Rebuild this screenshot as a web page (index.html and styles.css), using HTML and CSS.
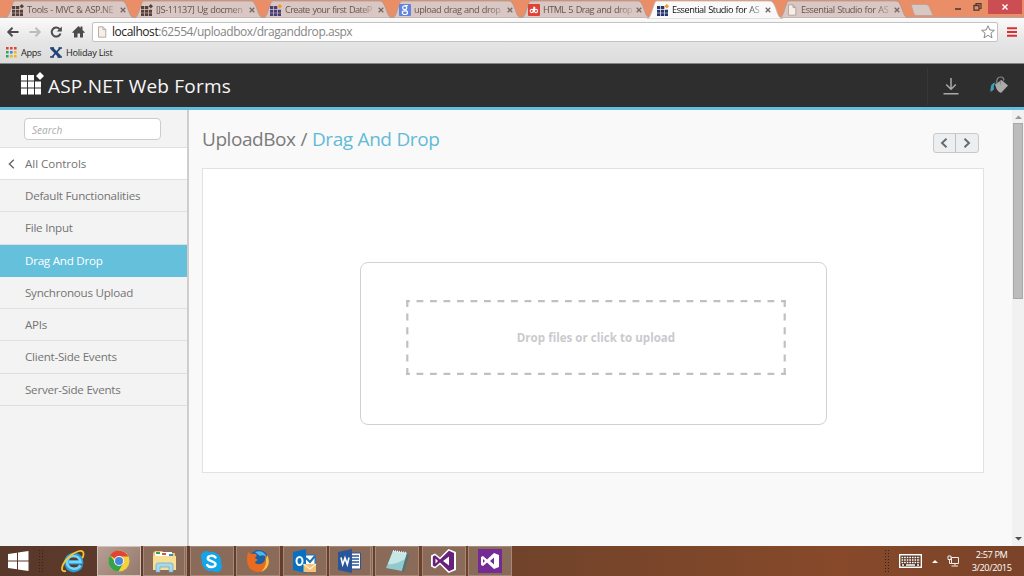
FILE: index.html
```html
<!DOCTYPE html>
<html lang="en">
<head>
<meta charset="utf-8">
<title>Essential Studio for ASP.NET Web Forms</title>
<link rel="stylesheet" href="styles.css">
</head>
<body>
<svg class="defs" width="0" height="0">
  <defs>
    <symbol id="tabshape" viewBox="0 0 136 19"><path d="M0 19C3 18 4 14 6 8C8 2 8 1 11 1H122C126 1 127 4 129 9C131 15 132 18 136 19Z"/></symbol>
    <symbol id="grid" viewBox="0 0 12 12"><path d="M0 2h3.300v3H0zM4 2h3.300v3H4zM0 5.700h3.300v3H0zM4 5.700h3.300v3H4zM8 5.700h3v3H8zM0 9.300h3.300v2.700H0zM4 9.300h3.300v2.700H4zM8 9.300h3v2.700H8z"/><path class="spark" d="M9.800 0L12 2.200L9.800 4.400L7.600 2.200Z"/></symbol>
    <symbol id="page" viewBox="0 0 10 12"><path d="M1.500 .8H6L8.800 3.600V11.200H1.500Z M6 .8V3.600H8.800"/></symbol>
  </defs>
</svg>
<div class="screen">
  <div class="tabs">
    <div class="tab"><svg class="shape"><use href="#tabshape"/></svg><svg class="fav brown"><use href="#grid"/></svg><span class="label">Tools - MVC &amp; ASP.NE</span><svg class="close" viewBox="0 0 6 6"><path d="M.7 .7L5.3 5.3M5.3 .7L.7 5.3"/></svg></div>
    <div class="tab"><svg class="shape"><use href="#tabshape"/></svg><svg class="fav brown"><use href="#grid"/></svg><span class="label">[JS-11137] Ug docmen</span><svg class="close" viewBox="0 0 6 6"><path d="M.7 .7L5.3 5.3M5.3 .7L.7 5.3"/></svg></div>
    <div class="tab"><svg class="shape"><use href="#tabshape"/></svg><svg class="fav purple"><use href="#grid"/></svg><span class="label tight">Create your first DateP</span><svg class="close" viewBox="0 0 6 6"><path d="M.7 .7L5.3 5.3M5.3 .7L.7 5.3"/></svg></div>
    <div class="tab"><svg class="shape"><use href="#tabshape"/></svg><svg class="fav" viewBox="0 0 12 12"><rect width="12" height="12" rx="1" fill="#6284df"/><ellipse cx="5.7" cy="3.7" rx="2" ry="1.9" fill="none" stroke="#fff" stroke-width="1.2"/><ellipse cx="5.9" cy="8.7" rx="2.6" ry="1.8" fill="none" stroke="#fff" stroke-width="1.2"/><path d="M6 1.6H9M6.5 5.5L7.5 7" stroke="#fff"/></svg><span class="label">upload drag and drop</span><svg class="close" viewBox="0 0 6 6"><path d="M.7 .7L5.3 5.3M5.3 .7L.7 5.3"/></svg></div>
    <div class="tab"><svg class="shape"><use href="#tabshape"/></svg><svg class="fav" viewBox="0 0 12 12"><rect width="12" height="12" rx="1" fill="#df4238"/><circle cx="3.8" cy="7" r="1.6" fill="none" stroke="#fff" stroke-width="1.1"/><circle cx="8" cy="7" r="1.6" fill="none" stroke="#fff" stroke-width="1.1"/><path d="M6 2.5L5.2 8.5M6.8 3L6.3 7" stroke="#fff" stroke-width="1.1"/></svg><span class="label tight">HTML 5 Drag and drop</span><svg class="close" viewBox="0 0 6 6"><path d="M.7 .7L5.3 5.3M5.3 .7L.7 5.3"/></svg></div>
    <div class="tab active"><svg class="shape"><use href="#tabshape"/></svg><svg class="fav navy"><use href="#grid"/></svg><span class="label">Essential Studio for AS</span><svg class="close" viewBox="0 0 6 6"><path d="M.7 .7L5.3 5.3M5.3 .7L.7 5.3"/></svg></div>
    <div class="tab"><svg class="shape"><use href="#tabshape"/></svg><svg class="fav paper"><use href="#page"/></svg><span class="label">Essential Studio for AS</span><svg class="close" viewBox="0 0 6 6"><path d="M.7 .7L5.3 5.3M5.3 .7L.7 5.3"/></svg></div>
    <svg class="newtab" viewBox="0 0 24 12"><path d="M1 .5H16Q18 .5 19 2.500L23 11.500H6Q4.500 11.500 3.700 9Z"/></svg>
    <div class="winbtns">
      <svg width="70" height="14" viewBox="0 0 70 14"><path d="M1 9H7" stroke="#493a35" stroke-width="1.6"/><path d="M22 5.500V3.600H27V8.500H25.500" fill="none" stroke="#493a35" stroke-width="1.200"/><path d="M20 5.500H25V10.200H20Z" fill="none" stroke="#493a35" stroke-width="1.300"/><path d="M34 0H68V14H34Z" fill="#cb4f52"/><path d="M48.500 4.500L53.500 9.500M53.500 4.500L48.500 9.500" stroke="#fff" stroke-width="1.400"/></svg>
    </div>
  </div>
  <div class="toolbar">
    <div class="navrow">
      <svg class="navicons" width="92" height="22" viewBox="0 0 92 22" fill="none"><path d="M18.500 11H8.500M12.500 6.800L8.300 11L12.500 15.200" stroke="#4b4b4b" stroke-width="2"/><path d="M29.500 11H39.500M35.500 6.800L39.700 11L35.500 15.200" stroke="#bcbcbc" stroke-width="2"/><path d="M60.500 12.500A4.500 4.500 0 1 1 59.500 8" stroke="#4b4b4b" stroke-width="2"/><path d="M61.800 5.500V10.500H56.800Z" fill="#4b4b4b"/><path d="M72 11.500L78.500 5L80.500 7V5.500H82.500V9L85 11.500L83.700 12L83 11.500V16.500H80V12.500H77.500V16.500H74V11.500L73.300 12Z" fill="#4b4b4b"/></svg>
      <div class="url"><svg class="urlpage"><use href="#page"/></svg><span class="address"><b>localhost</b>:62554/uploadbox/draganddrop.aspx</span><svg class="star" viewBox="0 0 14 14"><path d="M7 .8L8.800 5L13.400 5.300L9.900 8.200L11 12.800L7 10.300L3 12.800L4.100 8.200L.6 5.300L5.200 5Z"/></svg></div>
      <svg class="menu" viewBox="0 0 10 10"><path d="M0 1.200H10M0 5H10M0 8.800H10" stroke="#dc3030" stroke-width="2"/></svg>
    </div>
    <div class="bookmarks">
      <svg class="apps" viewBox="0 0 11 11"><path fill="#e14438" d="M0 0h2.600v2.600H0zM4 0h2.600v2.600H4zM8 0h2.600v2.600H8z"/><path fill="#27a95d" d="M0 4h2.600v2.600H0zM0 8h2.600v2.600H0z"/><path fill="#3988e8" d="M4 4h2.600v2.600H4z"/><path fill="#efb622" d="M8 4h2.600v2.600H8zM4 8h2.600v2.600H4zM8 8h2.600v2.600H8z"/></svg><span class="bk-apps">Apps</span>
      <svg class="xmark" viewBox="0 0 12 11"><path d="M1.500 1L10.200 10" stroke="#1f4478" stroke-width="3"/><path d="M10.500 .8L2 10" stroke="#1f4478" stroke-width="1.700"/><path d="M0 1H4M8.500 1H12M0 10H4M7.500 10H12" stroke="#1f4478" stroke-width="1.500"/></svg><span class="bk-holiday">Holiday List</span>
    </div>
  </div>
  <header class="header">
    <svg class="logo" width="23" height="23" viewBox="0 0 23 23"><path fill="#fff" d="M0 3h6v5.500H0zM7 3h6v5.500H7zM0 9.500h6v6H0zM7 9.500h6v6H7zM14 9.500h6v6H14zM0 16.500h6v6H0zM7 16.500h6v6H7zM14 16.500h6v6H14zM19 0L23 4L19 8L15 4Z"/></svg>
    <span class="brand">ASP.NET Web Forms</span>
    <div class="actions">
      <svg width="16" height="18" viewBox="0 0 16 18" fill="none" stroke="#aaa" stroke-width="1.500"><path d="M8 1V12M3.200 7.500L8 12.300L12.800 7.500M.5 16.800H15.500"/></svg>
      <svg class="bucket" width="18" height="18" viewBox="0 0 18 18"><path d="M6 6.500C1.500 7 .5 9 .5 16L4 13.500C3.500 10 4 8.500 6 6.500Z" fill="#3e9db8"/><path d="M5 8.500L11.500 4L18 9.500L11.500 16.500Q10 17 8.500 15.500Q6 13 5 8.500Z" fill="#aaa"/><path d="M7 8C6 3 8 1 10.500 1C13 1 14.500 3 13.500 4.500M10.500 8.500V4.500" fill="none" stroke="#888" stroke-width="1.200"/></svg>
    </div>
  </header>
  <div class="page">
    <aside class="sidebar">
      <div class="searchwrap"><div class="search">Search</div></div>
      <div class="item all"><svg width="7" height="10" viewBox="0 0 7 10"><path d="M5.800 .8L1.400 5L5.800 9.200" fill="none" stroke="#666" stroke-width="1.400"/></svg><span>All Controls</span></div>
      <div class="item"><span>Default Functionalities</span></div>
      <div class="item"><span>File Input</span></div>
      <div class="item selected"><span>Drag And Drop</span></div>
      <div class="item"><span>Synchronous Upload</span></div>
      <div class="item"><span>APIs</span></div>
      <div class="item"><span>Client-Side Events</span></div>
      <div class="item"><span>Server-Side Events</span></div>
    </aside>
    <main class="main">
      <div class="titlebar">
        <h1>UploadBox / <span>Drag And Drop</span></h1>
        <div class="pager"><div><svg width="8" height="10" viewBox="0 0 8 10"><path d="M6.500 .8L2 5L6.500 9.200"/></svg></div><div><svg width="8" height="10" viewBox="0 0 8 10"><path d="M1.500 .8L6 5L1.500 9.200"/></svg></div></div>
      </div>
      <div class="sample">
        <div class="uploadbox">
          <div class="drop">
            <svg class="dashes" width="380" height="75" viewBox="0 0 380 75" fill="none" stroke="#c0c0c2" stroke-width="2.200"><path d="M0 1.200H380M0 73.800H380" stroke-dasharray="6.800 6.700" stroke-dashoffset="3"/><path d="M1.300 0V75M378.700 0V75" stroke-dasharray="7 6.600"/></svg>
            <span>Drop files or click to upload</span>
          </div>
        </div>
      </div>
    </main>
    <div class="scroll"><svg width="7" height="4" viewBox="0 0 7 4"><path d="M0 4L3.500 .5L7 4Z" fill="#999"/></svg><div class="thumb"></div><svg width="7" height="4" viewBox="0 0 7 4"><path d="M0 0L3.500 3.500L7 0Z" fill="#505050"/></svg></div>
  </div>
  <footer class="taskbar">
    <svg class="start" width="21" height="20" viewBox="0 0 21 20" fill="#fff"><path d="M0 3L9 1.700V9.500H0ZM10 1.500L20.500 0V9.500H10ZM0 10.500H9V18.200L0 17ZM10 10.500H20.500V20L10 18.400Z"/></svg>
    <div class="grip"></div>
    <svg class="ie" width="24" height="24" viewBox="0 0 24 24" fill="none"><path d="M20 16C18 23 5.500 23 5.500 13.500C5.500 3.500 20 3.500 20 13.200H7" stroke="#2a9cd6" stroke-width="4.500"/><path d="M19.500 16.500C16 21.500 6.500 20.500 6 13C6.500 5 18.500 5 19.500 13H8" stroke="#77d5f7" stroke-width="2.500"/><path d="M5 22C-2 24 1 14 8 8C14 2 22 0 22.500 4C22.700 6 22 8 21 9" stroke="#f4c52f" stroke-width="1.800"/></svg>
    <div class="apps-row">
      <div class="task current"><svg width="22" height="22" viewBox="0 0 22 22"><circle cx="11" cy="11" r="10.500" fill="#f3d23c"/><path d="M11 11L2 5.500A10.500 10.500 0 0 1 20.300 6.500H11Z" fill="#df4435"/><path d="M2 5.500A10.500 10.500 0 0 0 10.500 21.500L15 13.500L8 13Z" fill="#35a34b"/><circle cx="11" cy="11" r="5" fill="#f7f7f7"/><circle cx="11" cy="11" r="4" fill="#4686dc"/></svg></div>
      <div class="task stacked"><svg width="25" height="23" viewBox="0 0 25 23"><path d="M1 3L3 1H10L12 3H23V20H1Z" fill="#e9c96f"/><path d="M3 2H20V6H3Z" fill="#fff"/><path d="M4 2h4v2H4z" fill="#38a458"/><path d="M10 3h4v2h-4z" fill="#db5442"/><path d="M17 4h4v2h-4z" fill="#3d8ec8"/><path d="M1 6H24V20H1Z" fill="#f7df95"/><path d="M4 22V15Q4 13 6 13H19Q21 13 21 15V22H17V17H8V22Z" fill="#a4d9ef" stroke="#67a8c9" stroke-width=".7"/></svg></div>
      <div class="task"><svg width="23" height="23" viewBox="0 0 23 23"><circle cx="11.500" cy="11.500" r="9.800" fill="#12a5e9"/><circle cx="6.500" cy="6.500" r="5.500" fill="#12a5e9"/><circle cx="16.500" cy="16.500" r="5.500" fill="#12a5e9"/><path d="M15.500 7.500C13.500 4.800 7.500 5.500 7.800 8.600C8 11.500 15.500 10.800 15.500 14.300C15.300 17.800 9 18 7.200 15" fill="none" stroke="#fff" stroke-width="2.500" stroke-linecap="round"/></svg></div>
      <div class="task"><svg width="24" height="24" viewBox="0 0 24 24"><circle cx="13" cy="10.500" r="9.500" fill="#1a62a8"/><path d="M9 3Q17 0 21 8Q17 5 14 7Z" fill="#52b8e6"/><path d="M2 3Q4 5 6 5Q9 4 11 6L9 9L12 11Q9 12 9 14Q14 17 18 13Q20 10 19 6Q24 9 23 14Q20 23 12 23Q1 22 1 11Q1 6 2 3Z" fill="#e96b20"/><path d="M21.500 6Q26 18 15 23Q21 17 20 10Z" fill="#f7c242"/></svg></div>
      <div class="task"><svg width="24" height="24" viewBox="0 0 24 24"><path d="M12 6H22V18H12Z" fill="#fff" stroke="#1672bd"/><path d="M13 9L17 13L22 7" fill="none" stroke="#1672bd" stroke-width="2"/><path d="M0 3L13 0V24L0 21Z" fill="#0870c2"/><ellipse cx="6.500" cy="12" rx="3" ry="4" fill="none" stroke="#fff" stroke-width="2"/><path d="M10.500 15H23V23H10.500Z" fill="#f2c27a"/><path d="M10.500 15L17 20L23 15" fill="none" stroke="#fff0d3" stroke-width="1.300"/></svg></div>
      <div class="task stacked"><svg width="24" height="24" viewBox="0 0 24 24"><path d="M11 4H22.500V20H11Z" fill="#fff" stroke="#2a5699"/><path d="M13 7H21M13 10H21M13 13H21M13 16H21" stroke="#2a5699" stroke-width="1.400"/><path d="M0 3L14 0V24L0 21Z" fill="#2a5699"/><path d="M3 8.500L4.700 15.500L7 9L9.300 15.500L11 8.500" fill="none" stroke="#fff" stroke-width="1.600"/></svg></div>
      <div class="task"><svg width="24" height="22" viewBox="0 0 24 22"><path d="M8 1L22 3L17 21L1 18Z" fill="#91c9cf"/><path d="M8 1L22 3L20 9Q11 15 3 14Z" fill="#c6e7e6"/><path d="M22 3L24 5L19 22L17 21Z" fill="#4d7476"/><path d="M8 1L22 3" stroke="#eef" stroke-width="2" stroke-dasharray="1 1"/></svg></div>
      <div class="task"><svg width="25" height="24" viewBox="0 0 25 24"><path d="M0 6.500L4 4.500L9 8.500L17.500 0L25 3V21L17.500 24L9 15.500L4 19.500L0 17.500Z" fill="#fff"/><path fill-rule="evenodd" d="M1.800 7.500L4 6.300L9 10.500L18 1.700L23 4V20L18 22.300L9 13.500L4 17.700L1.800 16.500ZM4.500 9.500V14.500L7 12ZM12 12L18 16.500V7.500Z" fill="#68217a"/></svg></div>
      <div class="task"><svg width="24" height="24" viewBox="0 0 24 24"><path d="M0 0H24V24H0Z" fill="#752b96"/><path fill-rule="evenodd" d="M3 8L5 7L9 10.500L16 4L21 6V18L16 20L9 13.500L5 17L3 16ZM5 10V14L7 12ZM12 12L16 15.500V8.500Z" fill="#fff"/></svg></div>
    </div>
    <div class="grip right"></div>
    <svg class="keyboard" width="23" height="14" viewBox="0 0 23 14"><path d="M.7 .7H22.300V13.300H.7Z" fill="#54301f" stroke="#fff" stroke-width="1.400"/><path d="M2.500 3.500H21M2.500 6H21M2.500 8.500H21" stroke="#fff" stroke-width="1.500" stroke-dasharray="1.700 .9"/><path d="M3 11H5M7 11H16M18 11H20" stroke="#fff" stroke-width="1.300"/></svg>
    <svg class="up" width="6" height="3" viewBox="0 0 6 3"><path d="M0 3L3 0L6 3Z" fill="#fff"/></svg>
    <svg class="network" width="12" height="12" viewBox="0 0 12 12" fill="none" stroke="#eee"><path d="M4.500 2.500H11.500V8.500H4.500ZM8 8.500V10.500M4.500 11H11M1 1H4V4.500H1ZM2.500 5V8.500H4.500"/></svg>
    <div class="clock"><span>2:57 PM</span><span>3/20/2015</span></div>
  </footer>
</div>
</body>
</html>
```

FILE: styles.css
```css
* { box-sizing: border-box; }
body { margin: 0; font-family: "Open Sans", "Noto Sans", sans-serif; }
svg { display: block; flex: none; }
span { white-space: nowrap; }
.defs { position: absolute; }
.screen { width: 1024px; height: 576px; display: flex; flex-direction: column; overflow: hidden; background: #f9f9f9; }

.tabs { height: 18px; flex: none; display: flex; background: #e98e67; padding-left: 2px; border-bottom: 1px solid #b3a6a4; }
.tab { position: relative; isolation: isolate; width: 129px; height: 19px; flex: none; display: flex; align-items: center; padding: 0 0 0 10px; color: #665451; font-size: 9.2px; }
.tab .shape { position: absolute; z-index: -1; left: 0; top: 0; width: 136px; height: 18px; fill: #d9c7c4; stroke: #a99894; stroke-width: .8; overflow: visible; }
.tab.active { z-index: 2; color: #111; }
.tab.active .shape { fill: #f9f9f9; height: 19px; stroke: #c5bab6; }
.fav { width: 12px; height: 12px; margin-right: 3px; }
.brown { fill: #574039; }
.purple { fill: #493d77; --spark: #f09a2a; }
.navy { fill: #29366e; --spark: #f09a2a; }
.spark { fill: var(--spark, #574039); }
.paper, .urlpage { fill: #f8eee8; stroke: #a69c96; stroke-width: .8; }
.label { width: 90px; letter-spacing: -.45px; word-spacing: .7px; line-height: 15px; -webkit-mask-image: linear-gradient(90deg, #000 82%, rgba(0,0,0,.25) 98%); mask-image: linear-gradient(90deg, #000 82%, rgba(0,0,0,.25) 98%); }
.tight { letter-spacing: -.6px; word-spacing: 1px; }
.close { width: 6px; height: 6px; margin-left: 3px; fill: none; stroke: #776661; stroke-width: 1.3; }
.newtab { width: 24px; height: 12px; margin: 4px 0 0 5px; fill: #d9c7c4; stroke: #b89d94; stroke-width: .7; }
.winbtns { margin-left: auto; }

.toolbar { height: 46px; flex: none; background: linear-gradient(#fafafa, #e5e5e5 54%, #dcdcdc); border-bottom: 1px solid #858585; }
.navrow { display: flex; align-items: center; height: 27px; padding-top: 1px; }
.url { width: 906px; height: 20px; display: flex; align-items: center; background: #fff; border: 1px solid #c2c2c2; border-radius: 2px; padding-left: 4px; font-size: 12px; color: #858585; }
.urlpage { width: 10px; height: 12px; margin-right: 5px; }
.url b { font-weight: 400; color: #222; }
.address { letter-spacing: -.45px; line-height: 17px; padding-bottom: 1px; }
.star { width: 14px; height: 14px; margin-left: auto; margin-right: 2px; fill: #fff; stroke: #888; stroke-width: 1; }
.menu { width: 10px; height: 10px; margin-left: 9px; }
.bookmarks { display: flex; align-items: center; padding-left: 6px; height: 15px; font-size: 9.2px; color: #222; }
.apps { width: 11px; height: 11px; margin-right: 4px; }
.bk-apps { width: 22px; letter-spacing: -.35px; }
.xmark { width: 12px; height: 11px; margin: 0 4px 0 7px; }
.bk-holiday { letter-spacing: -.25px; }

.header { height: 46px; flex: none; display: flex; background: #2e2e2e; border-bottom: 3px solid #65bddc; padding-left: 21px; }
.logo { margin-top: 8px; }
.brand { color: #f7f7f7; font-size: 19px; line-height: 45px; margin-left: 4px; letter-spacing: .2px; }
.actions { width: 97px; margin: 4px 0 2px auto; border-left: 1px solid #383838; display: flex; padding: 9px 0 0 15px; }
.bucket { margin: -1px 0 0 31px; }

.page { height: 436px; flex: none; display: flex; }
.sidebar { width: 189px; background: #f3f3f3; border-right: 2px solid #d0cdca; }
.searchwrap { height: 37px; padding: 8px 0 0 24px; }
.search { width: 137px; height: 22px; border: 1px solid #ccc; border-radius: 4px; background: #fff; font: italic 10px/22px "Open Sans", sans-serif; color: #aaa; padding-left: 7px; letter-spacing: .05px; }
.item { height: 32.25px; border-bottom: 1px solid #dfdfdf; color: #737373; font-size: 11.6px; line-height: 31px; padding-left: 25px; letter-spacing: -.24px; }
.all { display: flex; align-items: center; height: 33px; background: #fff; border-top: 1px solid #dfdfdf; padding-left: 8px; letter-spacing: -.05px; line-height: 30px; }
.all svg { margin-right: 10px; }
.selected { background: #65c0dc; color: #fff; border-color: #65c0dc; }
.main { width: 823px; padding-left: 13px; }
.titlebar { height: 58px; display: flex; justify-content: space-between; width: 776.5px; }
h1 { font-size: 19px; line-height: 28px; font-weight: 400; color: #7b7b7b; margin: 15px 0 0; letter-spacing: -.45px; word-spacing: .5px; }
h1 span { color: #61bbd7; }
.pager { width: 46px; height: 20px; margin-top: 23px; display: flex; border: 1px solid #c9c9c9; border-radius: 3px; background: #eceeef; }
.pager div { flex: 1; display: flex; align-items: center; justify-content: center; }
.pager div + div { border-left: 1px solid #c1c1c1; }
.pager path { fill: none; stroke: #626a70; stroke-width: 1.9; }
.sample { width: 782px; height: 305px; background: #fff; border: 1px solid #e2e2e2; padding: 93px 0 0 157px; }
.uploadbox { width: 467px; height: 163px; border: 1px solid #d2d2d2; border-radius: 8px; padding: 37px 0 0 45px; }
.drop { position: relative; width: 380px; height: 75px; display: flex; align-items: center; justify-content: center; color: #cacace; font-size: 11.6px; line-height: 16px; font-weight: 700; }
.dashes { position: absolute; left: 0; top: 0; }
.scroll { width: 12px; background: #f1f1f1; display: flex; flex-direction: column; align-items: center; padding: 5px 0; }
.thumb { width: 10px; height: 176px; border: 1px solid #a8a8a8; background: #bcbcbc; margin: 4px 1px auto 0; }

.taskbar { height: 30px; flex: none; display: flex; align-items: center; background: linear-gradient(90deg, #58382b, #70432a 50%, #87492a 82%, #7a4329); }
.start { margin-left: 8px; }
.grip { width: 6px; height: 24px; margin-left: 9px; background: radial-gradient(circle, #33221b .8px, transparent 1px) 0 0 / 3px 3px; }
.ie { margin-left: 17px; }
.apps-row { display: grid; grid-template-columns: repeat(9, 44px); column-gap: 2.4px; margin-left: 12px; height: 30px; }
.task { display: flex; align-items: center; justify-content: center; border: 1px solid #a78979; background: #8a6a59; }
.current { background: linear-gradient(135deg, #b79f95, #94796c); border-color: #d3c0b7; }
.stacked { border-right: 3px double #a78979; }
.right { margin-left: 372px; }
.keyboard { margin-left: 9px; }
.up { margin-left: 10px; }
.network { margin-left: 9px; }
.clock { margin-left: 12px; display: flex; flex-direction: column; align-items: center; width: 41px; color: #fff; font-size: 9.2px; line-height: 13px; letter-spacing: -.4px; }
```
